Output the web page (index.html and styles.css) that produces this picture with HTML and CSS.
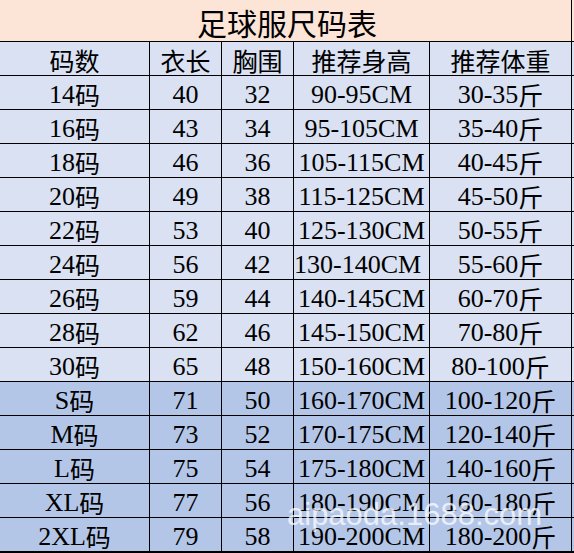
FILE: index.html
```html
<!DOCTYPE html>
<html lang="zh-CN">
<head>
<meta charset="utf-8">
<title>足球服尺码表</title>
<link rel="stylesheet" href="styles.css">
</head>
<body>
<div class="sheet">
  <div class="chart">
    <div class="cell title">足球服尺码表</div><div class="cell edge title-edge"></div>

    <div class="cell cn">码数</div><div class="cell cn">衣长</div><div class="cell cn">胸围</div><div class="cell cn">推荐身高</div><div class="cell cn">推荐体重</div><div class="cell edge"></div>

    <div class="cell">14<span class="cn">码</span></div><div class="cell">40</div><div class="cell">32</div><div class="cell">90-95CM</div><div class="cell">30-35<span class="cn">斤</span></div><div class="cell edge"></div>
    <div class="cell">16<span class="cn">码</span></div><div class="cell">43</div><div class="cell">34</div><div class="cell">95-105CM</div><div class="cell">35-40<span class="cn">斤</span></div><div class="cell edge"></div>
    <div class="cell">18<span class="cn">码</span></div><div class="cell">46</div><div class="cell">36</div><div class="cell">105-115CM</div><div class="cell">40-45<span class="cn">斤</span></div><div class="cell edge"></div>
    <div class="cell">20<span class="cn">码</span></div><div class="cell">49</div><div class="cell">38</div><div class="cell">115-125CM</div><div class="cell">45-50<span class="cn">斤</span></div><div class="cell edge"></div>
    <div class="cell">22<span class="cn">码</span></div><div class="cell">53</div><div class="cell">40</div><div class="cell">125-130CM</div><div class="cell">50-55<span class="cn">斤</span></div><div class="cell edge"></div>
    <div class="cell">24<span class="cn">码</span></div><div class="cell">56</div><div class="cell">42</div><div class="cell left">130-140CM</div><div class="cell">55-60<span class="cn">斤</span></div><div class="cell edge"></div>
    <div class="cell">26<span class="cn">码</span></div><div class="cell">59</div><div class="cell">44</div><div class="cell">140-145CM</div><div class="cell">60-70<span class="cn">斤</span></div><div class="cell edge"></div>
    <div class="cell">28<span class="cn">码</span></div><div class="cell">62</div><div class="cell">46</div><div class="cell">145-150CM</div><div class="cell">70-80<span class="cn">斤</span></div><div class="cell edge"></div>
    <div class="cell">30<span class="cn">码</span></div><div class="cell">65</div><div class="cell">48</div><div class="cell">150-160CM</div><div class="cell">80-100<span class="cn">斤</span></div><div class="cell edge"></div>

    <div class="cell dk">S<span class="cn">码</span></div><div class="cell dk">71</div><div class="cell dk">50</div><div class="cell dk">160-170CM</div><div class="cell dk">100-120<span class="cn">斤</span></div><div class="cell dk edge"></div>
    <div class="cell dk">M<span class="cn">码</span></div><div class="cell dk">73</div><div class="cell dk">52</div><div class="cell dk">170-175CM</div><div class="cell dk">120-140<span class="cn">斤</span></div><div class="cell dk edge"></div>
    <div class="cell dk">L<span class="cn">码</span></div><div class="cell dk">75</div><div class="cell dk">54</div><div class="cell dk">175-180CM</div><div class="cell dk">140-160<span class="cn">斤</span></div><div class="cell dk edge"></div>
    <div class="cell dk">XL<span class="cn">码</span></div><div class="cell dk">77</div><div class="cell dk">56</div><div class="cell dk">180-190CM</div><div class="cell dk">160-180<span class="cn">斤</span></div><div class="cell dk edge"></div>
    <div class="cell dk">2XL<span class="cn">码</span></div><div class="cell dk">79</div><div class="cell dk">58</div><div class="cell dk">190-200CM</div><div class="cell dk">180-200<span class="cn">斤</span></div><div class="cell dk edge"></div>
  </div>
  <div class="watermark">aipaoda.1688.com</div>
</div>
</body>
</html>
```
FILE: styles.css
```css
html, body {
  margin: 0;
  padding: 0;
  background: #ffffff;
}

.sheet {
  position: relative;
  width: 574px;
  height: 553px;
  overflow: hidden;
}

.chart {
  display: grid;
  grid-template-columns: 149px 71px 71px 135px 141px 2px;
  grid-template-rows: 41px repeat(15, 33px);
  row-gap: 1px;
  column-gap: 1px;
  background: #000000;
  border-bottom: 2px solid #000000;
  width: 574px;
}

.cell {
  background: #d9e1f2;
  color: #000000;
  font-family: "Liberation Serif", "Noto Sans CJK SC", serif;
  font-size: 26px;
  line-height: 29px;
  display: flex;
  align-items: center;
  justify-content: center;
  padding-top: 4px;
  box-sizing: border-box;
  white-space: nowrap;
}

.cn {
  font-family: "Noto Sans CJK SC", sans-serif;
  font-weight: 400;
  font-size: 25px;
}

.cell.dk {
  background: #b4c6e7;
}

.cell.left {
  justify-content: flex-start;
  padding-left: 0;
}

.title {
  grid-column: 1 / 6;
  background: #fce4d6;
  font-family: "Noto Sans CJK SC", sans-serif;
  font-size: 30px;
  line-height: 36px;
  padding-top: 2px;
  padding-left: 3px;
}

.title-edge {
  background: #fce4d6;
}

.edge {
  padding: 0;
}

.watermark {
  position: absolute;
  left: 287px;
  top: 497px;
  font-family: "Liberation Sans", sans-serif;
  font-size: 31px;
  line-height: 36px;
  color: rgba(255, 255, 255, 0.72);
}
```
